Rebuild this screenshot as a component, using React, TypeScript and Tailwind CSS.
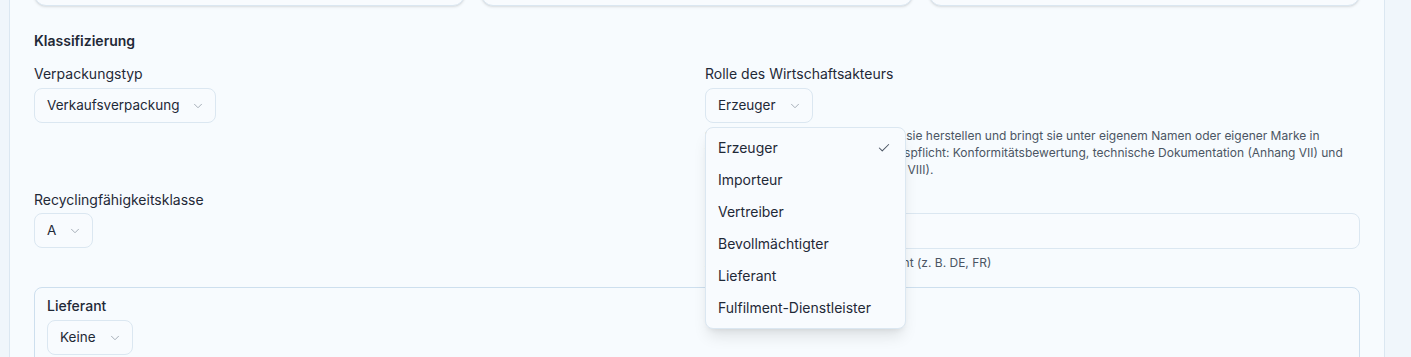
import { Check, ChevronDown } from "lucide-react";

function Select({ value }: { value: string }) {
  return (
    <div className="inline-flex h-[35px] items-center gap-3 self-start rounded-lg border border-[#dbe7f1] bg-[#f8fbfe] pl-3 pr-[10px] text-[13.5px] text-[#1f2937]">
      <span>{value}</span>
      <ChevronDown className="h-3.5 w-3.5 text-[#9aa3ae]" strokeWidth={1.5} />
    </div>
  );
}

function Label({ children }: { children: string }) {
  return <div className="text-sm leading-5 text-[#1f2937]">{children}</div>;
}

const roles = [
  "Erzeuger",
  "Importeur",
  "Vertreiber",
  "Bevollmächtigter",
  "Lieferant",
  "Fulfilment-Dienstleister",
];

export default function App() {
  return (
    <div
      className="h-[357px] overflow-hidden bg-[#f0f6fb]"
      style={{ fontFamily: "Inter, 'Noto Sans', sans-serif" }}
    >
      <div className="ml-[9px] h-[420px] w-[1376px] border-x border-[#dbe7f1] bg-[#f7fbfe] px-6">
        {/* cards scrolled above */}
        <div className="-mt-[44px] grid grid-cols-3 gap-4">
          <div className="h-[50px] rounded-xl border border-[#dbe7f1] bg-[#f8fbfe] shadow-sm" />
          <div className="h-[50px] rounded-xl border border-[#dbe7f1] bg-[#f8fbfe] shadow-sm" />
          <div className="h-[50px] rounded-xl border border-[#dbe7f1] bg-[#f8fbfe] shadow-sm" />
        </div>

        <div className="mt-[25px] text-sm font-semibold leading-5 text-[#1f2937]">
          Klassifizierung
        </div>

        <div className="mt-[13px] grid grid-cols-2 gap-x-4 gap-y-3">
          <div className="flex flex-col gap-1">
            <Label>Verpackungstyp</Label>
            <Select value="Verkaufsverpackung" />
          </div>
          <div className="relative flex flex-col gap-1">
            <Label>Rolle des Wirtschaftsakteurs</Label>
            <Select value="Erzeuger" />
            <p className="text-xs leading-[17px] text-[#4b5563]">
              Sie füllen Packungen – oder lassen sie herstellen und bringt sie unter eigenem Namen oder eigener Marke in
              Verkehr. Erweiterte Kennzeichnungspflicht: Konformitätsbewertung, technische Dokumentation (Anhang VII) und
              EU-Konformitätserklärung (Anhang VIII).
            </p>

            <div className="absolute left-0 top-[63px] z-10 w-[201px] rounded-lg border border-[#dbe7f1] bg-[#f8fbfe] p-1 shadow-lg">
              {roles.map((r, i) => (
                <div
                  key={r}
                  className="flex h-8 items-center justify-between pl-2 pr-[10px] text-sm text-[#1f2937]"
                >
                  <span>{r}</span>
                  {i === 0 && <Check className="h-3.5 w-3.5 text-[#4b5563]" strokeWidth={1.75} />}
                </div>
              ))}
            </div>
          </div>

          <div className="flex flex-col gap-[3px]">
            <Label>Recyclingfähigkeitsklasse</Label>
            <Select value="A" />
          </div>
          <div className="flex flex-col gap-[3px]">
            <Label>Herkunftsland</Label>
            <div className="h-[36px] rounded-lg border border-[#dbe7f1] bg-[#f8fbfe]" />
            <p className="mt-[3px] text-xs leading-4 text-[#4b5563]">
              Alle ISO-Landcodes, kommagetrennt (z. B. DE, FR)
            </p>
          </div>
        </div>

        <div className="mt-4 h-[100px] rounded-lg border border-[#cddfee] px-3 pt-2">
          <div className="flex flex-col gap-1">
            <div className="text-sm font-medium leading-5 text-[#1f2937]">Lieferant</div>
            <Select value="Keine" />
          </div>
        </div>
      </div>
    </div>
  );
}
